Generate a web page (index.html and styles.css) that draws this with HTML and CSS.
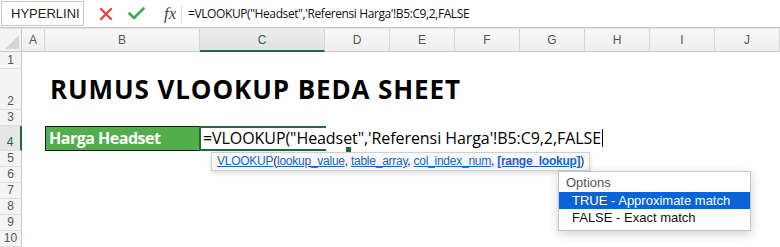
FILE: index.html
```html
<!DOCTYPE html>
<html lang="id">
<head>
  <meta charset="UTF-8" />
  <title>Rumus VLOOKUP Beda Sheet</title>
  <link rel="stylesheet" href="styles.css">
</head>
<body>
  <div class="formula-bar">
    <div class="name-box">
      <span>HYPERLINI</span>
      <svg class="spin" width="9" height="16" viewBox="0 0 9 16">
        <path d="M1 6.5 L4.5 1.5 L8 6.5 Z" fill="#a9a9a9"/>
        <path d="M1 9.5 L4.5 14.5 L8 9.5 Z" fill="#a9a9a9"/>
      </svg>
    </div>
    <div class="fb-icons">
      <svg class="ico" width="14" height="14" viewBox="0 0 14 14">
        <path d="M2 2 L12 12 M12 2 L2 12" stroke="#e2453f" stroke-width="2.4" stroke-linecap="round"/>
      </svg>
      <svg class="ico" width="17" height="13" viewBox="0 0 17 13">
        <path d="M1.5 6.5 L6 11 L15.5 1.5" fill="none" stroke="#43a649" stroke-width="2.6" stroke-linecap="round" stroke-linejoin="round"/>
      </svg>
      <span class="fx">fx</span>
    </div>
    <div class="fb-text">=VLOOKUP("Headset",'Referensi Harga'!B5:C9,2,FALSE</div>
  </div>

  <div class="sheet">
    <!-- header kolom -->
    <div class="corner"><svg width="14" height="14" viewBox="0 0 14 14"><path d="M14 0 L14 14 L0 14 Z" fill="#d5d5d5"/></svg></div>
    <div class="col-h">A</div>
    <div class="col-h">B</div>
    <div class="col-h active">C</div>
    <div class="col-h">D</div>
    <div class="col-h">E</div>
    <div class="col-h">F</div>
    <div class="col-h">G</div>
    <div class="col-h">H</div>
    <div class="col-h">I</div>
    <div class="col-h">J</div>

    <!-- baris 1 -->
    <div class="row-h">1</div>
    <div class="row-cells"></div>

    <!-- baris 2 -->
    <div class="row-h">2</div>
    <div class="row-cells">
      <div class="title">RUMUS VLOOKUP BEDA SHEET</div>
    </div>

    <!-- baris 3 -->
    <div class="row-h">3</div>
    <div class="row-cells"></div>

    <!-- baris 4 -->
    <div class="row-h active">4</div>
    <div class="row-cells r4">
      <div class="cell-a"></div>
      <div class="cell-label">Harga Headset</div>
      <div class="cell-edit">=VLOOKUP("Headset",'Referensi Harga'!B5:C9,2,FALSE<span class="caret"></span></div>
      <span class="fill-handle"></span>
      <div class="hint">
        <a>VLOOKUP</a>(<a>lookup_value</a>, <a>table_array</a>, <a>col_index_num</a>, <a class="b">[range_lookup]</a>)
      </div>
      <div class="options">
        <div class="opt-head">Options</div>
        <div class="opt sel">TRUE - Approximate match</div>
        <div class="opt">FALSE - Exact match</div>
      </div>
    </div>

    <div class="row-h">5</div><div class="row-cells"></div>
    <div class="row-h">6</div><div class="row-cells"></div>
    <div class="row-h">7</div><div class="row-cells"></div>
    <div class="row-h">8</div><div class="row-cells"></div>
    <div class="row-h">9</div><div class="row-cells"></div>
    <div class="row-h">10</div><div class="row-cells"></div>
  </div>
</body>
</html>
```

FILE: styles.css
```css
body {
  margin: 0;
  background: #ffffff;
  font-family: 'Liberation Sans', Arial, sans-serif;
  color: #222;
  width: 780px;
  height: 247px;
  overflow: hidden;
}
/* bar rumus */
.formula-bar {
  height: 28px;
  box-sizing: border-box;
  border-bottom: 1px solid #c9c9c9;
  display: flex;
  align-items: center;
  background: #fff;
}
.name-box {
  width: 83px;
  height: 25px;
  margin-left: 1px;
  box-sizing: border-box;
  border: 1px solid #c6c6c6;
  display: flex;
  align-items: center;
  justify-content: space-between;
  padding: 0 3px 0 9px;
  font-size: 13px;
  color: #222;
}
.fb-icons {
  width: 97px;
  display: flex;
  align-items: center;
  padding-left: 15px;
  box-sizing: border-box;
  gap: 15px;
}
.fx {
  font-family: 'Liberation Serif', serif;
  font-style: italic;
  font-size: 17px;
  color: #444;
  margin-left: 4px;
}
.fb-text {
  border-left: 1px solid #dcdcdc;
  height: 18px;
  line-height: 18px;
  padding-left: 6px;
  font-family: 'Open Sans', sans-serif;
  font-size: 12px;
  letter-spacing: -0.4px;
  color: #111;
}
/* lembar kerja */
.sheet {
  display: grid;
  grid-template-columns: 22px 23px 155px 125px repeat(7, 65px);
  grid-template-rows: 23px 17px 41px 16px 25px repeat(6, 16px);
  border-top: 1px solid #e2e2e2;
}
.corner {
  background: #f3f3f3;
  border-right: 1px solid #c9c9c9;
  border-bottom: 1px solid #c9c9c9;
  box-sizing: border-box;
  display: flex;
  align-items: flex-end;
  justify-content: flex-end;
  padding: 0 2px 2px 0;
}
.col-h {
  background: linear-gradient(#f7f7f7, #efefef);
  border-right: 1px solid #d6d6d6;
  border-bottom: 1px solid #c9c9c9;
  box-sizing: border-box;
  display: flex;
  align-items: center;
  justify-content: center;
  font-size: 12px;
  color: #555;
}
.col-h.active {
  color: #1e6b3d;
  border-bottom: 2px solid #1e6b3d;
  background: linear-gradient(#ececec, #e2e2e2);
}
.row-h {
  grid-column: 1;
  background: #f4f4f4;
  border-right: 1px solid #c9c9c9;
  border-bottom: 1px solid #dedede;
  box-sizing: border-box;
  display: flex;
  align-items: flex-end;
  justify-content: center;
  padding-bottom: 1px;
  font-size: 12px;
  color: #555;
}
.row-h.active {
  border-right: 2px solid #1e6b3d;
  color: #1e6b3d;
  background: #e6e6e6;
}
.row-cells {
  grid-column: 2 / -1;
  display: flex;
  align-items: flex-end;
}
.title {
  margin-left: 28px;
  margin-bottom: 6px;
  font-family: 'Open Sans', sans-serif;
  font-weight: bold;
  font-size: 26px;
  letter-spacing: 0.9px;
  color: #000;
  line-height: 30px;
}
.r4 {
  position: relative;
  align-items: stretch;
}
.cell-a {
  width: 23px;
  flex: none;
}
.cell-label {
  width: 155px;
  flex: none;
  box-sizing: border-box;
  background: #52ae4c;
  border: 1px solid #1b1b1b;
  color: #fff;
  font-family: 'Open Sans', sans-serif;
  font-weight: bold;
  font-size: 16px;
  letter-spacing: -0.5px;
  padding-left: 3px;
  line-height: 22px;
}
.cell-edit {
  width: 127px;
  flex: none;
  box-sizing: border-box;
  border: 2px solid #1e6b3d;
  border-right: none;
  margin-left: -1px;
  white-space: nowrap;
  position: relative;
  z-index: 2;
  font-family: 'Open Sans', sans-serif;
  font-size: 16px;
  letter-spacing: -0.07px;
  color: #000;
  padding-left: 2px;
  line-height: 21px;
}
.caret {
  display: inline-block;
  width: 1px;
  height: 18px;
  background: #000;
  vertical-align: -3px;
  margin-left: 1px;
}
.fill-handle {
  position: absolute;
  left: 323px;
  bottom: -2px;
  width: 5px;
  height: 5px;
  background: #1e6b3d;
  border: 1px solid #fff;
  z-index: 3;
}
/* petunjuk fungsi */
.hint {
  position: absolute;
  left: 189px;
  top: 26px;
  width: 379px;
  height: 19px;
  box-sizing: border-box;
  background: #f8f8f8;
  border: 1px solid #cfcfcf;
  box-shadow: 0 2px 5px rgba(0, 0, 0, 0.15);
  padding-left: 5px;
  font-size: 12px;
  letter-spacing: -0.25px;
  line-height: 17px;
  color: #222;
  white-space: nowrap;
  z-index: 4;
}
.hint a {
  color: #1762d1;
  text-decoration: underline;
}
.hint a.b {
  font-weight: bold;
}
/* daftar pilihan */
.options {
  position: absolute;
  left: 536px;
  top: 45px;
  width: 193px;
  box-sizing: border-box;
  background: #fff;
  border: 1px solid #c4c4c4;
  box-shadow: 0 3px 10px rgba(0, 0, 0, 0.18);
  padding: 1px 0 4px;
  font-size: 13px;
  z-index: 4;
}
.opt-head {
  color: #555;
  padding-left: 7px;
  height: 19px;
  line-height: 19px;
}
.opt {
  padding-left: 13px;
  height: 17px;
  line-height: 17px;
  color: #111;
}
.opt.sel {
  background: #0b63d8;
  color: #fff;
}
```
